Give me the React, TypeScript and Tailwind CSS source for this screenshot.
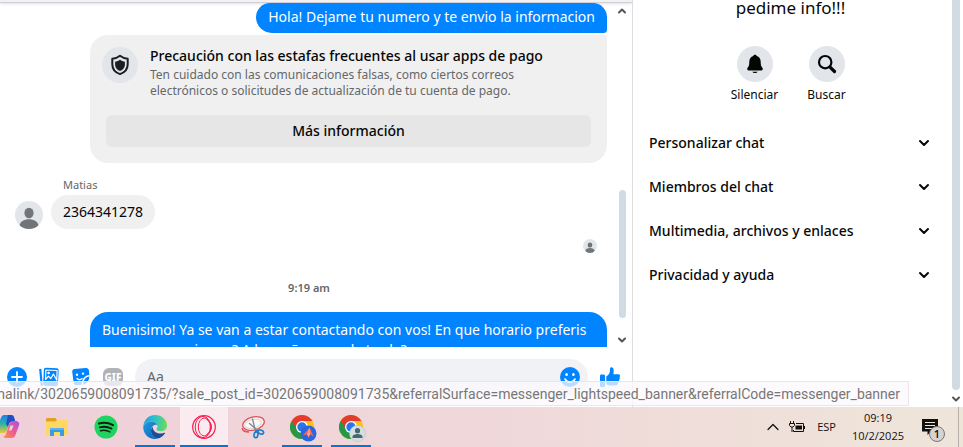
import { ReactNode } from "react";
import { ChevronDown, ChevronUp } from "lucide-react";

interface ITask {
  name: string;
  icon: ReactNode;
  open?: boolean;
  active?: boolean;
}

const SECTIONS = [
  "Personalizar chat",
  "Miembros del chat",
  "Multimedia, archivos y enlaces",
  "Privacidad y ayuda",
];

// ! Icons

const Avatar = ({ className }: { className: string }) => (
  <svg viewBox="0 0 28 28" className={`shrink-0 rounded-full ${className}`} aria-hidden="true">
    <rect width="28" height="28" fill="#e2e5ea" />
    <ellipse cx="14" cy="12" rx="4.6" ry="5.2" fill="#717579" />
    <path d="M4.500 24.500C5 20.500 9 18.200 14 18.200s9 2.300 9.500 6.300L20 28H8z" fill="#717579" />
  </svg>
);

const ShieldIcon = () => (
  <svg viewBox="0 0 20 22" className="h-[22px] w-5" aria-hidden="true">
    <path d="M10 1.800c2.200 1.700 4.700 2.700 7.700 3v5.400c0 4.700-2.900 8.200-7.700 9.900-4.800-1.700-7.700-5.200-7.700-9.900V4.800c3-.3 5.500-1.300 7.700-3z" fill="none" stroke="#1c1e21" strokeWidth="2" strokeLinejoin="round" />
    <path d="M10 5.800c1.500 1.100 3.100 1.700 4.900 1.900v3c0 2.900-1.900 5-4.900 6.300-3-1.300-4.900-3.400-4.900-6.300v-3c1.800-.2 3.400-.8 4.900-1.900z" fill="#1c1e21" />
  </svg>
);

const BellIcon = () => (
  <svg viewBox="0 0 20 20" className="size-5" fill="#050505" aria-hidden="true">
    <path d="M10 .8c.9 0 1.500.5 1.700 1.300 2.500.8 4 2.900 4 5.700 0 3.400.5 4.500 1.700 6 .9 1.200.3 2.700-1.200 2.700H3.800c-1.500 0-2.100-1.500-1.200-2.700 1.200-1.500 1.700-2.600 1.700-6 0-2.800 1.500-4.900 4-5.700C8.500 1.300 9.100.8 10 .8z" />
    <path d="M7.300 17.700h5.400c-.5.900-1.500 1.400-2.700 1.400s-2.200-.5-2.700-1.400z" />
  </svg>
);

const SearchIcon = () => (
  <svg viewBox="0 0 20 20" className="size-5" fill="none" stroke="#050505" aria-hidden="true">
    <circle cx="8.200" cy="8.200" r="6.200" strokeWidth="2.200" />
    <path d="M13.300 13.300l4.200 4.200" strokeWidth="3.200" strokeLinecap="round" />
  </svg>
);

const PlusIcon = () => (
  <svg viewBox="0 0 20 20" className="size-5" aria-hidden="true">
    <circle cx="10" cy="10" r="10" fill="#0084ff" />
    <path d="M10 5v10M5 10h10" stroke="#fff" strokeWidth="1.800" strokeLinecap="round" />
  </svg>
);

const PhotoIcon = () => (
  <svg viewBox="0 0 20 20" className="size-5" aria-hidden="true">
    <path d="M1.200 1.800l1.600 17" stroke="#0084ff" strokeWidth="2.200" />
    <rect x="4.500" y="1" width="14.800" height="18" rx="2" fill="#0084ff" transform="rotate(3 12 10)" />
    <path d="M6.500 12.500l3-3.300 2.300 2.400 2.600-4.600 3.400 6.200.3-9.700L6.900 3z" fill="none" stroke="#fff" strokeWidth="1.200" strokeLinejoin="round" />
    <circle cx="9.600" cy="6" r="1.300" fill="#fff" />
  </svg>
);

const StickerIcon = () => (
  <svg viewBox="0 0 20 20" className="size-5" aria-hidden="true">
    <path d="M3.500 2l11-1c2-.2 3.300.8 3.500 2.700l.3 4.300c-4.500.4-7.300 3.600-7.800 9.800l-4.500.4c-2 .2-3.200-.8-3.400-2.700L1.300 5.400C1 3.500 1.800 2.200 3.500 2z" fill="#0084ff" />
    <path d="M18.300 9.500c-3.500.5-5.900 3.200-6.300 8.200 3.500-.7 6.200-4 6.300-8.200z" fill="#0084ff" />
    <circle cx="6" cy="7.800" r="1.200" fill="#fff" />
    <circle cx="12" cy="6.600" r="1.200" fill="#fff" />
    <path d="M6 11.500c1.400 1.400 3.300 1.500 5 .2" fill="none" stroke="#fff" strokeWidth="1.400" strokeLinecap="round" />
  </svg>
);

const SmileIcon = () => (
  <svg viewBox="0 0 20 20" className="size-5" aria-hidden="true">
    <circle cx="10" cy="10" r="10" fill="#0084ff" />
    <ellipse cx="6.600" cy="7.500" rx="1.300" ry="1.600" fill="#fff" />
    <ellipse cx="13.400" cy="7.500" rx="1.300" ry="1.600" fill="#fff" />
    <path d="M5 12c1.100 2 2.900 3 5 3s3.900-1 5-3" fill="none" stroke="#fff" strokeWidth="1.600" strokeLinecap="round" />
  </svg>
);

const LikeIcon = () => (
  <svg viewBox="0 0 20 20" className="size-5" fill="#0084ff" aria-hidden="true">
    <rect x="0" y="7.500" width="5" height="12.500" rx="1.200" />
    <path d="M6.300 9.300c2-.9 3.300-2.600 3.500-4.700L10 2c.1-1.200.8-1.900 1.800-1.700 1.400.3 2 1.700 1.900 3.500l-.3 3.500h4.700c1.900 0 2.500 1.900 1.300 3 .7.900.5 2.200-.5 2.800.4 1 .1 2-.9 2.600.2 1.600-.8 2.800-2.500 2.800h-4.300c-2 0-3.400-.4-4.900-1.300z" />
  </svg>
);

const CopilotIcon = () => (
  <svg viewBox="0 0 24 24" className="size-6" aria-hidden="true">
    <defs>
      <linearGradient id="cop1" x1="0" y1="0" x2="0" y2="1">
        <stop offset="0" stopColor="#1f7fe8" />
        <stop offset=".5" stopColor="#2cb5a5" />
        <stop offset="1" stopColor="#f4c431" />
      </linearGradient>
      <linearGradient id="cop2" x1="1" y1="0" x2="0" y2="1">
        <stop offset="0" stopColor="#a553e8" />
        <stop offset=".5" stopColor="#ef5a8f" />
        <stop offset="1" stopColor="#fa9a4a" />
      </linearGradient>
    </defs>
    <path d="M15 0H8C5.500 0 4.500 4 3.500 7l-2 6.500C.7 16.500 2 18 4.500 18H8c2 0 2.500-1.500 3-3l3-10c.4-1.500 1-2.300 2.300-2.300z" fill="url(#cop1)" />
    <path d="M12 0h3.500c1.800 0 2.600 1.700 3 3.500L19.500 7H16c-2 0-2.800.8-3.300 2.500L12 12l-2-3z" fill="#1e4fc4" />
    <path d="M9 23h7c2.500 0 3.500-3 4.500-6l2.500-6.500C24 7.500 22 6 19.500 6H16c-2 0-2.500 2.500-3 4l-3 9c-.5 1.500-1.500 2.500-3 2.500z" fill="url(#cop2)" />
    <path d="M14.500 10.500h3l-2 5h-3z" fill="#efd1da" />
  </svg>
);

const FolderIcon = () => (
  <svg viewBox="0 0 22 20" className="h-5 w-[22px]" aria-hidden="true">
    <path d="M1 1h8.500l1.500 2H22v4H0V2z" fill="#e2a01c" />
    <path d="M0 4.500h9l2-1.500h11v15H0z" fill="#ffd863" />
    <path d="M4 11h14v8h-4v-4H8v4H4z" fill="#3a9be0" />
    <path d="M4 11h14v2H4z" fill="#57b3ee" />
  </svg>
);

const SpotifyIcon = () => (
  <svg viewBox="0 0 24 24" className="size-6" aria-hidden="true">
    <circle cx="12" cy="12" r="11.500" fill="#1ed35f" />
    <g fill="none" stroke="#10200f" strokeLinecap="round">
      <path d="M5 8.500c4.500-1.300 9.500-.8 14 1.600" strokeWidth="2.200" />
      <path d="M5.800 12.300c4-1.100 8-.6 11.700 1.300" strokeWidth="1.900" />
      <path d="M6.600 15.700c3.300-.8 6.500-.4 9.400 1.200" strokeWidth="1.600" />
    </g>
  </svg>
);

const EdgeIcon = () => (
  <svg viewBox="0 0 24 24" className="size-6" aria-hidden="true">
    <defs>
      <linearGradient id="edge1" x1="0" y1=".3" x2="1" y2=".4">
        <stop offset="0" stopColor="#209fe0" />
        <stop offset=".5" stopColor="#2fc2c8" />
        <stop offset="1" stopColor="#67de55" />
      </linearGradient>
      <linearGradient id="edge2" x1="0" y1="0" x2="1" y2="1">
        <stop offset="0" stopColor="#1b9de2" />
        <stop offset="1" stopColor="#1361b5" />
      </linearGradient>
    </defs>
    <path d="M.3 11C1 4.500 6 0 12 0c7 0 12 5 12 10.500 0 3.500-2.500 5.700-6 5.700-2.500 0-4.500-.8-4.500-2 0-.8 1-1.200 1-2.700 0-2.500-2.300-5-6.500-5C4.300 6.500 1.500 8 .3 11z" fill="url(#edge1)" />
    <path d="M.2 11.500C1.500 8.200 4.500 6.500 8 6.500c3 0 5.300 1.300 6.200 3.300C11 9 8 11.500 8 15.500c0 3.500 2.500 7 6.500 8.200C7 25.500 0 20 .2 11.500z" fill="url(#edge2)" />
    <path d="M9.800 11.500c-1 1.200-1.800 2.700-1.800 4.300 0 3.800 3.200 7.500 7 7.700 3-.8 5.500-2.700 7-5.200.3-.5-.1-.8-.6-.5-1 .5-2.300.8-3.700.8-4.500 0-8.500-3-7.900-7.100z" fill="#174f97" />
  </svg>
);

const OperaIcon = () => (
  <svg viewBox="0 0 24 24" className="size-6" fill="none" stroke="#fa1e4e" aria-hidden="true">
    <circle cx="12" cy="12" r="11.300" strokeWidth="1.200" />
    <ellipse cx="11" cy="12" rx="7.800" ry="10.600" strokeWidth="1" />
    <ellipse cx="12.300" cy="12" rx="6" ry="9" strokeWidth="1" />
    <path d="M14.500 4.500c3 1.300 5 4.200 5 7.500s-2 6.200-5 7.500" strokeWidth="1" />
  </svg>
);

const SnipIcon = () => (
  <svg viewBox="0 0 24 24" className="size-6" fill="none" aria-hidden="true">
    <ellipse cx="12.500" cy="8.500" rx="11" ry="6.500" transform="rotate(-14 12.500 8.500)" fill="#f8f8f8" stroke="#e0525a" strokeWidth="1.300" />
    <ellipse cx="12" cy="8.800" rx="8.500" ry="4.500" transform="rotate(-14 12 8.800)" stroke="#d9d3d6" />
    <path d="M1 13c.5 2.500 3.500 4 7 4" stroke="#e0525a" strokeWidth="1.300" />
    <path d="M11.500 4l3 12M8.500 8.500l8 7" stroke="#7d878d" strokeWidth="1.300" strokeLinecap="round" />
    <ellipse cx="15" cy="19.800" rx="1.900" ry="2.900" transform="rotate(10 15 19.800)" stroke="#1f7fc8" strokeWidth="1.700" />
    <ellipse cx="19.800" cy="17" rx="2.900" ry="1.900" transform="rotate(25 19.800 17)" stroke="#1f7fc8" strokeWidth="1.700" />
    <path d="M14.300 16.800l2.700-1.500" stroke="#1f7fc8" strokeWidth="1.700" />
  </svg>
);

const ChromeIcon = ({ badge }: { badge: "app" | "user" }) => (
  <svg viewBox="0 0 27 27" className="size-[27px] translate-x-px translate-y-px" aria-hidden="true">
    <circle cx="12" cy="12" r="12" fill="#fbc116" />
    <path d="M12 12L1.600 6A12 12 0 0 0 12 24l5-9z" fill="#269847" />
    <path d="M12 6h10.400A12 12 0 0 0 1.600 6L7 14z" fill="#e33b2e" />
    <circle cx="12" cy="12" r="6" fill="#fff" />
    <circle cx="12" cy="12" r="4.700" fill="#2d74e7" />
    {badge === "app" ? (
      <>
        <circle cx="18.500" cy="18.500" r="8" fill="#2867e3" />
        <path d="M19.500 12.500l4.200 9-3.700-2-1.500 3-1.300-3.300-4.200 1.300z" fill="#f5694f" />
        <path d="M19.500 12.500l.5 7-1.500 3-1.300-3.300z" fill="#ffa08a" />
      </>
    ) : (
      <>
        <circle cx="18.500" cy="18.500" r="8" fill="#d4dfe2" stroke="#b3c3c8" strokeWidth=".6" />
        <circle cx="18.500" cy="15.700" r="2.600" fill="#4b666f" />
        <path d="M13.500 23v-1.300c0-1.800 2.800-2.700 5-2.700s5 .9 5 2.700V23z" fill="#4b666f" />
      </>
    )}
  </svg>
);

const BatteryIcon = () => (
  <svg viewBox="0 0 16 12" className="h-3 w-4" fill="none" stroke="#111" aria-hidden="true">
    <path d="M7 2.500h7.500v8H4.500V9M15.500 5v3" />
    <path d="M6.500 4.500H13v4H6.500z" fill="#111" stroke="none" />
    <path d="M1.500 0v2.500M4.500 0v2.500M.5 2.500h5v2L4 6H2L.5 4.500zM3 6v5" />
  </svg>
);

const NoticeIcon = () => (
  <svg viewBox="0 0 16 16" className="size-4" aria-hidden="true">
    <path d="M0 0h16v12.500H9L5.500 16v-3.500H0z" fill="#111" />
    <path d="M3 3.500h10M3 6.500h10M3 9.500h10" stroke="#efe3da" />
  </svg>
);

// Looping Data

const TASKS: ITask[] = [
  { name: "Copilot", icon: <CopilotIcon /> },
  { name: "Explorador", icon: <FolderIcon /> },
  { name: "Spotify", icon: <SpotifyIcon /> },
  { name: "Edge", icon: <EdgeIcon />, open: true },
  { name: "Opera", icon: <OperaIcon />, open: true, active: true },
  { name: "Recortes", icon: <SnipIcon /> },
  { name: "Chrome", icon: <ChromeIcon badge="app" />, open: true },
  { name: "Chrome 2", icon: <ChromeIcon badge="user" />, open: true },
];

const Messages = () => (
  <div className="flex min-h-0 flex-1">
    <div className="flex min-w-0 flex-1 flex-col overflow-hidden pl-[15px] pr-2">
      <div className="max-w-[517px] shrink-0 self-end rounded-b-[18px] rounded-br-sm rounded-tr-2xl rounded-tl-2xl bg-[#0084ff] px-3 pt-1 pb-[6px] text-sm leading-5 text-white">
        Hola! Dejame tu numero y te envio la informacion
      </div>
      <div className="mt-[2px] w-[517px] shrink-0 self-end rounded-[18px] rounded-tr-sm bg-[#f0f0f0] pb-4">
        <div className="flex gap-3 px-3 pt-[11px]">
          <div className="mt-px flex size-9 shrink-0 items-center justify-center rounded-full bg-[#e2e5ea]">
            <ShieldIcon />
          </div>
          <div>
            <h3 className="text-sm leading-5 font-medium text-[#050505]">
              Precaución con las estafas frecuentes al usar apps de pago
            </h3>
            <p className="mt-px max-w-[400px] text-xs leading-4 text-[#65676b]">
              Ten cuidado con las comunicaciones falsas, como ciertos correos
              electrónicos o solicitudes de actualización de tu cuenta de pago.
            </p>
          </div>
        </div>
        <div className="px-4 pt-4">
          <button className="h-8 w-full rounded-md bg-[#e6e6e6] text-sm font-medium text-[#050505]">
            Más información
          </button>
        </div>
      </div>

      <div className="mt-3 flex shrink-0 items-end gap-2">
        <Avatar className="size-7" />
        <div>
          <p className="pl-3 text-[11px] leading-5 text-[#65676b]">Matias</p>
          <div className="rounded-[18px] bg-[#f0f0f0] px-3 py-[7px] text-sm leading-5 text-[#050505]">
            2364341278
          </div>
        </div>
      </div>

      <Avatar className="mt-[10px] mr-[10px] size-[14px] self-end" />

      <p className="mt-[27px] shrink-0 pr-1 text-center text-[11px] leading-4 font-semibold text-[#65676b]">
        9:19 am
      </p>

      <div className="mt-4 w-[517px] shrink-0 self-end rounded-[18px] bg-[#0084ff] px-3 py-2 text-sm leading-5 text-white">
        Buenisimo! Ya se van a estar contactando con vos! En que horario
        preferis que se comuniquen? A la mañana o a la tarde?
      </div>
    </div>
    <div className="flex w-[17px] shrink-0 flex-col items-center justify-between pt-[2px] pr-[3px] pb-px">
      <ChevronUp className="size-3 text-[#555]" strokeWidth={4} />
      <div className="mt-auto mb-4 h-32 w-[7px] rounded-full bg-[#d0dbe4]" />
      <ChevronDown className="size-3 text-[#555]" strokeWidth={4} />
    </div>
  </div>
);

const Composer = () => (
  <form className="flex h-[60px] shrink-0 items-center pr-3 pl-[7px]">
    <div className="flex gap-3">
      <button type="button" aria-label="Más"><PlusIcon /></button>
      <button type="button" aria-label="Foto"><PhotoIcon /></button>
      <button type="button" aria-label="Sticker"><StickerIcon /></button>
      <button type="button" className="my-px h-[18px] w-5 rounded-md bg-[#b0b3b8] text-center text-[10px] leading-[18px] font-extrabold text-white">
        GIF
      </button>
    </div>
    <div className="ml-3 flex h-9 min-w-0 flex-1 items-center rounded-[18px] bg-[#f0f2f5] pr-2 pl-3">
      <input
        aria-label="Mensaje"
        placeholder="Aa"
        className="min-w-0 flex-1 bg-transparent text-sm outline-none placeholder:text-[#65676b]"
      />
      <button type="button" aria-label="Emoji"><SmileIcon /></button>
    </div>
    <button type="button" aria-label="Me gusta" className="ml-3"><LikeIcon /></button>
  </form>
);

const SidePanel = () => (
  <aside className="flex w-[331px] shrink-0 border-l border-[#dcdde1] text-[#080809]">
    <div className="flex-1 pr-5 pl-4">
      <h2 className="text-center text-[17px] leading-4">pedime info!!!</h2>
      <div className="mt-[30px] flex justify-center gap-6">
        <button className="flex w-12 flex-col items-center gap-[3px] text-xs leading-5">
          <span className="flex size-9 items-center justify-center rounded-full bg-[#e2e5ea]"><BellIcon /></span>
          Silenciar
        </button>
        <button className="flex w-12 flex-col items-center gap-[3px] text-xs leading-5">
          <span className="flex size-9 items-center justify-center rounded-full bg-[#e2e5ea]"><SearchIcon /></span>
          Buscar
        </button>
      </div>
      <div className="mt-4">
        {SECTIONS.map((item) => (
          <button
            key={item}
            className="flex h-11 w-full items-center justify-between text-sm font-medium"
          >
            {item}
            <ChevronDown className="size-4" strokeWidth={3} />
          </button>
        ))}
      </div>
    </div>
    <div className="mr-[3px] flex w-2 flex-col items-center">
      <div className="w-full flex-1 rounded-b-full bg-[#d0dbe4]" />
      <ChevronDown className="mt-[3px] mb-[2px] size-3 text-[#555]" strokeWidth={4} />
    </div>
  </aside>
);

const Taskbar = () => (
  <footer className="flex h-10 shrink-0 justify-between overflow-hidden bg-linear-to-r from-[#efd0d9] via-[#f0d8da] to-[#eee5d9] text-[#111]">
    <div className="-ml-4 flex gap-px">
      {TASKS.map((item) => (
        <button
          key={item.name}
          aria-label={item.name}
          className={`relative flex w-12 items-center justify-center ${item.active ? "bg-[#f9ebf0]" : ""}`}
        >
          {item.icon}
          {item.open && (
            <span className={`absolute bottom-0 h-[2px] bg-[#0078d7] ${item.active ? "w-12" : "w-10"}`} />
          )}
        </button>
      ))}
    </div>
    <div className="flex items-center font-['Open_Sans',sans-serif] text-[11px]">
      <ChevronUp className="size-5" strokeWidth={1.5} />
      <span className="ml-[6px]"><BatteryIcon /></span>
      <span className="ml-3">ESP</span>
      <div className="ml-4 text-center leading-[18px]">
        <p>09:19</p>
        <p>10/2/2025</p>
      </div>
      <button aria-label="Notificaciones" className="relative ml-[18px]">
        <NoticeIcon />
        <span className="absolute top-[7px] left-[7px] flex size-4 items-center justify-center rounded-full border border-[#777] bg-[#d5d2cf] font-semibold">
          1
        </span>
      </button>
      <span className="ml-5 h-full w-[5px] border-l border-[#b5ada8]" />
    </div>
  </footer>
);

const App = () => {
  return (
    <div className="flex h-screen flex-col overflow-hidden bg-white font-['Noto_Sans','Open_Sans',sans-serif]">
      <main className="relative flex min-h-0 flex-1">
        <section className="flex min-w-0 flex-1 flex-col">
          <div className="h-[3px] shrink-0 border-b border-[#cfd0d8] bg-[#f2f2f4] shadow-sm" />
          <Messages />
          <Composer />
        </section>
        <SidePanel />
        <div className="absolute right-[54px] bottom-px left-0 flex h-[25px] items-center justify-end overflow-hidden border border-l-0 border-[#efe2ec] bg-[#fcf8fc]/75 pr-2 font-['Roboto',sans-serif] text-sm whitespace-nowrap text-[#777]">
          ermalink/3020659008091735/?sale_post_id=3020659008091735&amp;referralSurface=messenger_lightspeed_banner&amp;referralCode=messenger_banner
        </div>
      </main>
      <Taskbar />
    </div>
  );
};

export default App;
